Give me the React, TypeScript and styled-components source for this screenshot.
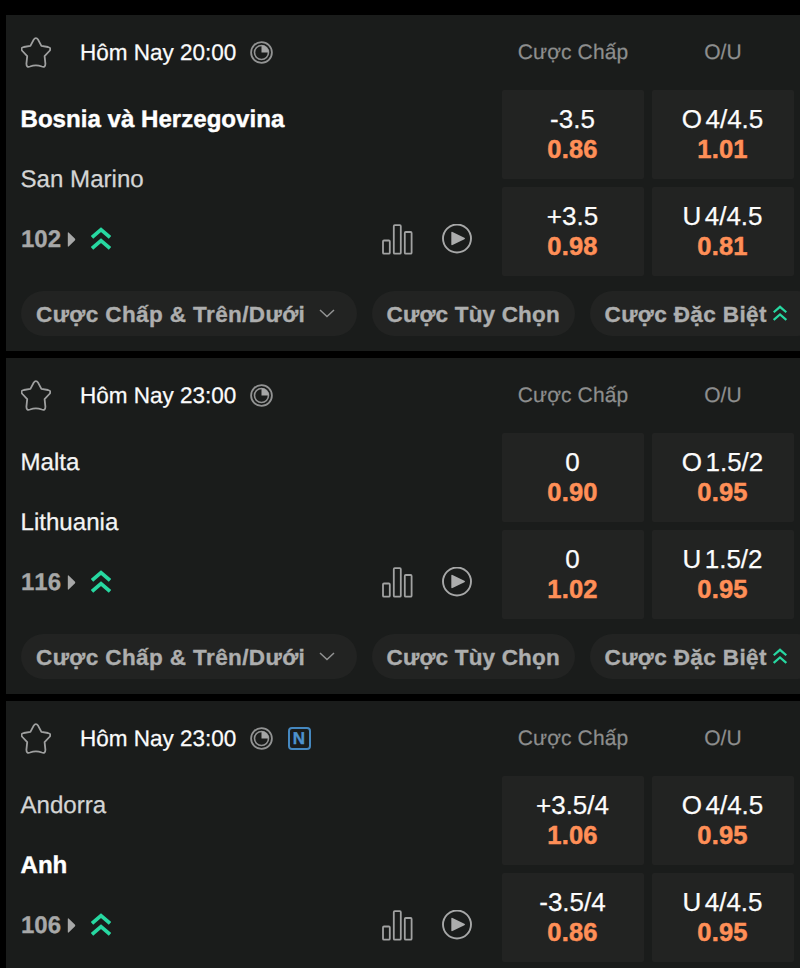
import React from "react";
import styled, { createGlobalStyle } from "styled-components";

const GlobalStyle = createGlobalStyle`
  * { box-sizing: border-box; }
  body {
    margin: 0;
    background: #000;
    overflow: hidden;
    font-family: "Liberation Sans", Arial, sans-serif;
    text-rendering: geometricPrecision;
    -webkit-font-smoothing: antialiased;
  }
`;

const Page = styled.main`
  width: 800px;
  height: 968px;
  padding: 15px 0 0 6px;
  display: flex;
  flex-direction: column;
  gap: 7px;
  overflow: hidden;
  background: #000;
`;

const Card = styled.article`
  flex: 0 0 336px;
  padding-left: 15px;
  background: #1a1c1b;
  overflow: hidden;
`;

const Header = styled.header`
  display: grid;
  grid-template-columns: 473px 142px 142px;
  column-gap: 8px;
  height: 74.5px;
  align-items: center;
`;

const Kickoff = styled.div`
  display: flex;
  align-items: center;
`;

const StarButton = styled.button`
  display: flex;
  width: 30px;
  height: 32px;
  margin: 2px 29.5px 0 -0.5px;
  padding: 0;
  border: 0;
  background: none;
`;

const Time = styled.time`
  width: 156px;
  margin-right: 14px;
  padding-top: 2px;
  font-size: 22.5px;
  line-height: 30px;
  color: #fbfbfb;
  -webkit-text-stroke: 0.25px currentColor;
  white-space: nowrap;
`;

const NeutralBadge = styled.span`
  display: flex;
  align-items: center;
  justify-content: center;
  width: 23px;
  height: 23px;
  margin-left: 14.5px;
  border: 2px solid #4588c0;
  border-radius: 4px;
  color: #4d92ce;
  font-size: 17px;
  font-weight: 700;
  line-height: 1;
  -webkit-text-stroke: 0.4px currentColor;
`;

const MarketTitle = styled.div`
  text-align: center;
  font-size: 21px;
  line-height: 28px;
  padding-top: 1px;
  letter-spacing: 0.1px;
  color: #8d8e8e;
  -webkit-text-stroke: 0.2px currentColor;
`;

const Body = styled.div`
  display: grid;
  grid-template-columns: 480.5px 292px;
  height: 186.5px;
`;

const Teams = styled.div`
  display: grid;
  grid-template-rows: 60px 60px 60px;
  align-items: center;
`;

const Team = styled.div<{ $tone: string; $bold?: boolean }>`
  color: ${(p) => p.$tone};
  font-size: 24.1px;
  line-height: 30px;
  margin-left: -0.5px;
  font-weight: ${(p) => (p.$bold ? 700 : 400)};
  -webkit-text-stroke: ${(p) => (p.$bold ? 0.4 : 0.25)}px currentColor;
`;

const Tools = styled.div`
  display: flex;
  align-items: center;
`;

const Count = styled.span`
  width: 46px;
  color: #a7a8a8;
  font-size: 24px;
  font-weight: 700;
  font-kerning: none;
  -webkit-text-stroke: 0.3px currentColor;
`;

const Media = styled.div`
  display: flex;
  align-items: center;
  gap: 29px;
  margin-left: auto;
  margin-right: 29.5px;
  padding-bottom: 1px;
`;

const OddsGrid = styled.div`
  display: grid;
  grid-template-columns: 142px 142px;
  grid-template-rows: 89.5px 89.5px;
  gap: 7.5px 8px;
`;

const OddsCell = styled.button`
  display: flex;
  flex-direction: column;
  align-items: center;
  justify-content: center;
  padding: 0;
  border: 0;
  border-radius: 2px;
  background: #222322;
  font-family: inherit;
`;

const Line = styled.span`
  display: flex;
  gap: 3.5px;
  color: #fcfcfc;
  font-size: 26px;
  line-height: 30px;
  -webkit-text-stroke: 0.25px currentColor;
`;

const Price = styled.span`
  color: #ff8f57;
  font-size: 25.5px;
  font-weight: 700;
  line-height: 30px;
  letter-spacing: 0.2px;
  -webkit-text-stroke: 0.5px currentColor;
`;

const Pills = styled.nav`
  display: flex;
  gap: 15px;
  margin-top: 15px;
  height: 45px;
`;

const Pill = styled.button<{ $width: number; $spacing: number }>`
  display: flex;
  align-items: center;
  flex: 0 0 ${(p) => p.$width}px;
  padding: 0 0 0 15px;
  border: 0;
  border-radius: 23px;
  background: #222322;
  color: #adaeae;
  font-family: inherit;
  font-size: 22.5px;
  font-weight: 700;
  letter-spacing: ${(p) => p.$spacing}px;
  white-space: nowrap;
`;

const PillLabel = styled.span<{ $width: number }>`
  width: ${(p) => p.$width}px;
  padding-top: 2px;
  text-align: left;
  -webkit-text-stroke: 0.35px currentColor;
`;

const StarIcon = () => (
  <svg width="30" height="32" viewBox="0 0 30 32" fill="none">
    <path
      d="M12.6 2.8Q14.9 -.6 17.2 2.8L20.4 8.9L27 10Q30.9 11 28.4 14L23.6 19.1L24.4 26.8Q24.4 30.7 20.8 29.5Q14.9 27.3 9 29.5Q5.4 30.7 5.4 26.8L6.2 19.1L1.4 14Q-1.1 11 2.8 10L9.4 8.9Z"
      stroke="#9fa0a0"
      strokeWidth="1.8"
      strokeLinejoin="round"
    />
  </svg>
);

const ClockIcon = () => (
  <svg width="23" height="23" viewBox="0 0 23 23" fill="none">
    <circle cx="11.5" cy="11.5" r="10.4" stroke="#929393" strokeWidth="1.8" />
    <circle cx="11.5" cy="11.5" r="7" stroke="#929393" strokeWidth="1.6" />
    <path d="M11.5 11.5V4.3A7.2 7.2 0 0 1 18.7 11.5Z" fill="#a5a6a6" />
  </svg>
);

const CaretIcon = () => (
  <svg width="9" height="16" viewBox="0 0 9 16">
    <path d="M.8 1Q.8 -.3 1.9 .7L7.8 6.6Q8.7 7.5 7.8 8.4L1.9 14.3Q.8 15.3 .8 14Z" fill="#a7a8a8" />
  </svg>
);

const BoostIcon = ({ size, stroke }: { size: number; stroke: number }) => (
  <svg width={size} height={(size * 23) / 20} viewBox="0 0 20 23" fill="none">
    <path d="M1 10.4L10 2.6L19 10.4M1 21.4L10 13.6L19 21.4" stroke="#27d8a1" strokeWidth={stroke} />
  </svg>
);

const BoostSlot = styled.span<{ $left: number; $lift?: number }>`
  display: flex;
  margin-left: ${(p) => p.$left}px;
  padding-bottom: ${(p) => p.$lift ?? 0}px;
`;

const StatsIcon = () => (
  <svg width="31" height="31" viewBox="0 0 31 31" fill="none" stroke="#a1a2a2" strokeWidth="1.8">
    <rect x="1" y="16.5" width="6.8" height="13.2" rx="1" />
    <rect x="11.8" y="1.2" width="7" height="28.5" rx="1" />
    <rect x="22.8" y="8" width="6.8" height="21.7" rx="1" />
  </svg>
);

const PlayIcon = () => (
  <svg width="30" height="30" viewBox="0 0 30 30" fill="none">
    <circle cx="15" cy="14.5" r="14" stroke="#a7a8a8" strokeWidth="1.9" />
    <path d="M9.3 8.7Q9.3 7.4 10.5 7.9L22.4 13.7Q23.8 14.5 22.4 15.3L10.5 21.1Q9.3 21.6 9.3 20.3Z" fill="#acadad" />
  </svg>
);

const ChevronIcon = () => (
  <svg width="16" height="9" viewBox="0 0 16 9" fill="none">
    <path d="M1 1L8 7.5L15 1" stroke="#929393" strokeWidth="1.5" />
  </svg>
);

interface Outcome {
  side?: string;
  line: string;
  price: string;
}

interface Match {
  time: string;
  neutral?: boolean;
  teams: { name: string; tone: string; bold?: boolean }[];
  markets: number;
  odds: Outcome[];
  pills: boolean;
}

const matches: Match[] = [
  {
    time: "Hôm Nay 20:00",
    teams: [
      { name: "Bosnia và Herzegovina", tone: "#fff", bold: true },
      { name: "San Marino", tone: "#d4d5d5" },
    ],
    markets: 102,
    odds: [
      { line: "-3.5", price: "0.86" },
      { side: "O", line: "4/4.5", price: "1.01" },
      { line: "+3.5", price: "0.98" },
      { side: "U", line: "4/4.5", price: "0.81" },
    ],
    pills: true,
  },
  {
    time: "Hôm Nay 23:00",
    teams: [
      { name: "Malta", tone: "#f4f4f4" },
      { name: "Lithuania", tone: "#f4f4f4" },
    ],
    markets: 116,
    odds: [
      { line: "0", price: "0.90" },
      { side: "O", line: "1.5/2", price: "0.95" },
      { line: "0", price: "1.02" },
      { side: "U", line: "1.5/2", price: "0.95" },
    ],
    pills: true,
  },
  {
    time: "Hôm Nay 23:00",
    neutral: true,
    teams: [
      { name: "Andorra", tone: "#d4d5d5" },
      { name: "Anh", tone: "#fff", bold: true },
    ],
    markets: 106,
    odds: [
      { line: "+3.5/4", price: "1.06" },
      { side: "O", line: "4/4.5", price: "0.95" },
      { line: "-3.5/4", price: "0.86" },
      { side: "U", line: "4/4.5", price: "0.95" },
    ],
    pills: false,
  },
];

const MatchCard = ({ match }: { match: Match }) => (
  <Card>
    <Header>
      <Kickoff>
        <StarButton aria-label="Yêu thích">
          <StarIcon />
        </StarButton>
        <Time>{match.time}</Time>
        <ClockIcon />
        {match.neutral && <NeutralBadge>N</NeutralBadge>}
      </Kickoff>
      <MarketTitle>Cược Chấp</MarketTitle>
      <MarketTitle>O/U</MarketTitle>
    </Header>
    <Body>
      <Teams>
        {match.teams.map((t) => (
          <Team key={t.name} $tone={t.tone} $bold={t.bold}>
            {t.name}
          </Team>
        ))}
        <Tools>
          <Count>{match.markets}</Count>
          <CaretIcon />
          <BoostSlot $left={15} $lift={2}>
            <BoostIcon size={20} stroke={3.7} />
          </BoostSlot>
          <Media>
            <StatsIcon />
            <PlayIcon />
          </Media>
        </Tools>
      </Teams>
      <OddsGrid>
        {match.odds.map((o, i) => (
          <OddsCell key={i}>
            <Line>
              {o.side && <span>{o.side}</span>}
              <span>{o.line}</span>
            </Line>
            <Price>{o.price}</Price>
          </OddsCell>
        ))}
      </OddsGrid>
    </Body>
    {match.pills && (
      <Pills>
        <Pill $width={335.5} $spacing={0.4}>
          <PillLabel $width={282.5}>Cược Chấp &amp; Trên/Dưới</PillLabel>
          <ChevronIcon />
        </Pill>
        <Pill $width={203} $spacing={0.18}>
          <PillLabel $width={173}>Cược Tùy Chọn</PillLabel>
        </Pill>
        <Pill $width={230} $spacing={0.38}>
          <PillLabel $width={163}>Cược Đặc Biệt</PillLabel>
          <BoostSlot $left={5}>
            <BoostIcon size={14} stroke={3.2} />
          </BoostSlot>
        </Pill>
      </Pills>
    )}
  </Card>
);

export default function App() {
  return (
    <>
      <GlobalStyle />
      <Page>
        {matches.map((m, i) => (
          <MatchCard key={i} match={m} />
        ))}
      </Page>
    </>
  );
}
